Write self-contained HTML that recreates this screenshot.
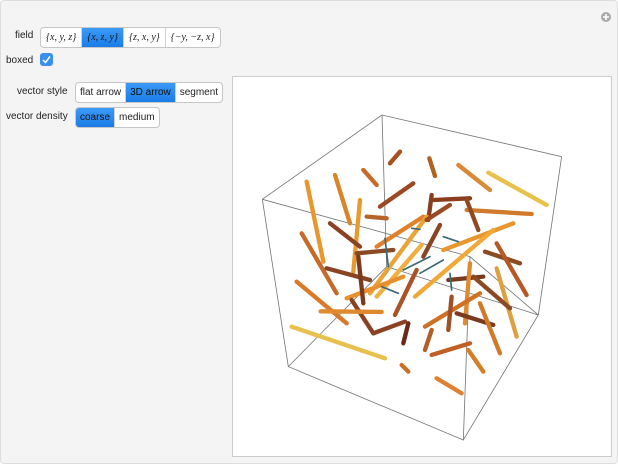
<!DOCTYPE html>
<html><head><style>
body{margin:0;width:618px;height:464px;background:#fff;font-family:"Liberation Sans",sans-serif;font-size:10px;color:#222;overflow:hidden}
.frame{position:absolute;left:0;top:0;width:616px;height:462px;background:#f4f4f4;border:1px solid #ddd;border-radius:4px}
.lbl{position:absolute;font-size:10px}
.bg{position:absolute;display:flex;border:1px solid #c6c6c6;border-radius:4px;background:#fff;overflow:hidden;height:19px}
.bg div{padding:0 4px;line-height:19px;border-right:1px solid #d0d0d0;white-space:nowrap}
.bg.f div{padding:0 5px}
.bg div:last-child{border-right:none}
.bg .on{background:linear-gradient(#3b9af7,#1a7ce8);color:#111}
.i{font-family:"Liberation Serif",serif;font-style:italic;font-size:10px}
.plot{position:absolute;left:232px;top:76px;width:378px;height:379px;background:#fff;border:1px solid #ccc}
.cb{position:absolute;left:40px;top:53px;width:13px;height:13px;background:#3b8ff0;border-radius:3px}
</style></head><body>
<div class="frame"></div>
<svg style="position:absolute;left:600px;top:11px" width="12" height="12"><circle cx="6" cy="6" r="5" fill="#aaa"/><path d="M6 3v6M3 6h6" stroke="#fff" stroke-width="1.6"/></svg>
<div class="lbl" style="left:15px;top:30px">field</div>
<div class="bg f" style="left:40px;top:27px">
<div class="i">{x, y, z}</div><div class="i on">{x, z, y}</div><div class="i">{z, x, y}</div><div class="i">{−y, −z, x}</div></div>
<div class="lbl" style="left:6px;top:55px">boxed</div>
<div class="cb"><svg width="13" height="13"><path d="M3 7l2.5 2.5L10 3.5" stroke="#fff" stroke-width="1.5" fill="none"/></svg></div>
<div class="lbl" style="left:17px;top:86px">vector style</div>
<div class="bg" style="left:75px;top:82px"><div>flat arrow</div><div class="on">3D arrow</div><div>segment</div></div>
<div class="lbl" style="left:6px;top:111px">vector density</div>
<div class="bg" style="left:75px;top:107px"><div class="on">coarse</div><div>medium</div></div>
<div class="plot"></div>
<svg style="position:absolute;left:0;top:0" width="618" height="464">
<g transform="translate(230,70) scale(0.3333)" fill="none" stroke-linecap="round">
<g stroke="#777" stroke-width="2.5">
<path d="M456 135L995 260L925 735L700 1110L175 890L97 388Z"/>
<path d="M97 388L720 560L925 735M720 560L700 1110M456 135L470 590L175 890M470 590L925 735"/>
</g>
<g stroke-width="13">
<path stroke="#e8962e" d="M230 335L280 575"/>
<path stroke="#d8842a" d="M315 315L360 460"/>
<path stroke="#c86a28" d="M400 300L440 345"/>
<path stroke="#a8521e" d="M480 280L510 245"/>
<path stroke="#b06022" d="M598 265L615 318"/>
<path stroke="#d88a36" d="M685 285L780 360"/>
<path stroke="#e8c04a" d="M775 308L950 405"/>
<path stroke="#9a4a22" d="M450 410L550 340"/>
<path stroke="#8a3e1e" d="M605 375L595 450M610 390L720 385"/>
<path stroke="#d07a2c" d="M710 420L905 432"/>
<path stroke="#8e4a22" d="M710 390L745 480"/>
<path stroke="#e89a30" d="M390 390L370 605"/>
<path stroke="#b86428" d="M410 440L470 445"/>
<path stroke="#8a4222" d="M300 460L390 530"/>
<path stroke="#e0822c" d="M440 530L580 440"/>
<path stroke="#c66a2a" d="M215 490L320 670"/>
<path stroke="#8c4a24" d="M380 550L490 540"/>
<path stroke="#e8a436" d="M420 670L590 440"/>
<path stroke="#f0b040" d="M440 680L575 525"/>
<path stroke="#8a4624" d="M580 560L630 465"/>
<path stroke="#9a4a22" d="M590 450L660 405"/>
<path stroke="#e8962e" d="M640 540L850 460"/>
<path stroke="#f0a838" d="M555 680L790 480"/>
<path stroke="#8a4a24" d="M765 545L870 580"/>
<path stroke="#b45a26" d="M800 520L890 675"/>
<path stroke="#e0a040" d="M800 595L860 800"/>
<path stroke="#884424" d="M290 595L420 630"/>
<path stroke="#e8902e" d="M350 685L520 620"/>
<path stroke="#7a3a20" d="M385 560L400 700"/>
<path stroke="#8a4224" d="M365 690L430 790"/>
<path stroke="#a85426" d="M495 735L560 600"/>
<path stroke="#7a3a1e" d="M655 630L760 620"/>
<path stroke="#e08a30" d="M720 580L705 760"/>
<path stroke="#8c4a24" d="M730 620L840 715"/>
<path stroke="#d87a2a" d="M200 635L350 760"/>
<path stroke="#e08a30" d="M272 724L455 726"/>
<path stroke="#8a4222" d="M430 790L525 755"/>
<path stroke="#6a2a18" d="M535 760L520 820"/>
<path stroke="#d07024" d="M585 770L750 670"/>
<path stroke="#a05026" d="M665 680L655 780"/>
<path stroke="#7a3a1e" d="M680 730L790 765"/>
<path stroke="#d07a2a" d="M750 700L810 850"/>
<path stroke="#e8c050" d="M185 770L465 865"/>
<path stroke="#b06026" d="M605 780L585 840"/>
<path stroke="#c06024" d="M605 855L720 820"/>
<path stroke="#d47e2a" d="M715 840L760 905"/>
<path stroke="#e08030" d="M620 925L695 970"/>
<path stroke="#c87028" d="M515 885L535 905"/>
</g>
<g stroke="#3a6a78" stroke-width="5">
<path d="M465 505L475 590M520 600L600 560M570 610L640 570M455 650L505 670M640 500L685 515M660 610L665 660M545 475L570 478"/>
</g>
</g></svg>
</body></html>
